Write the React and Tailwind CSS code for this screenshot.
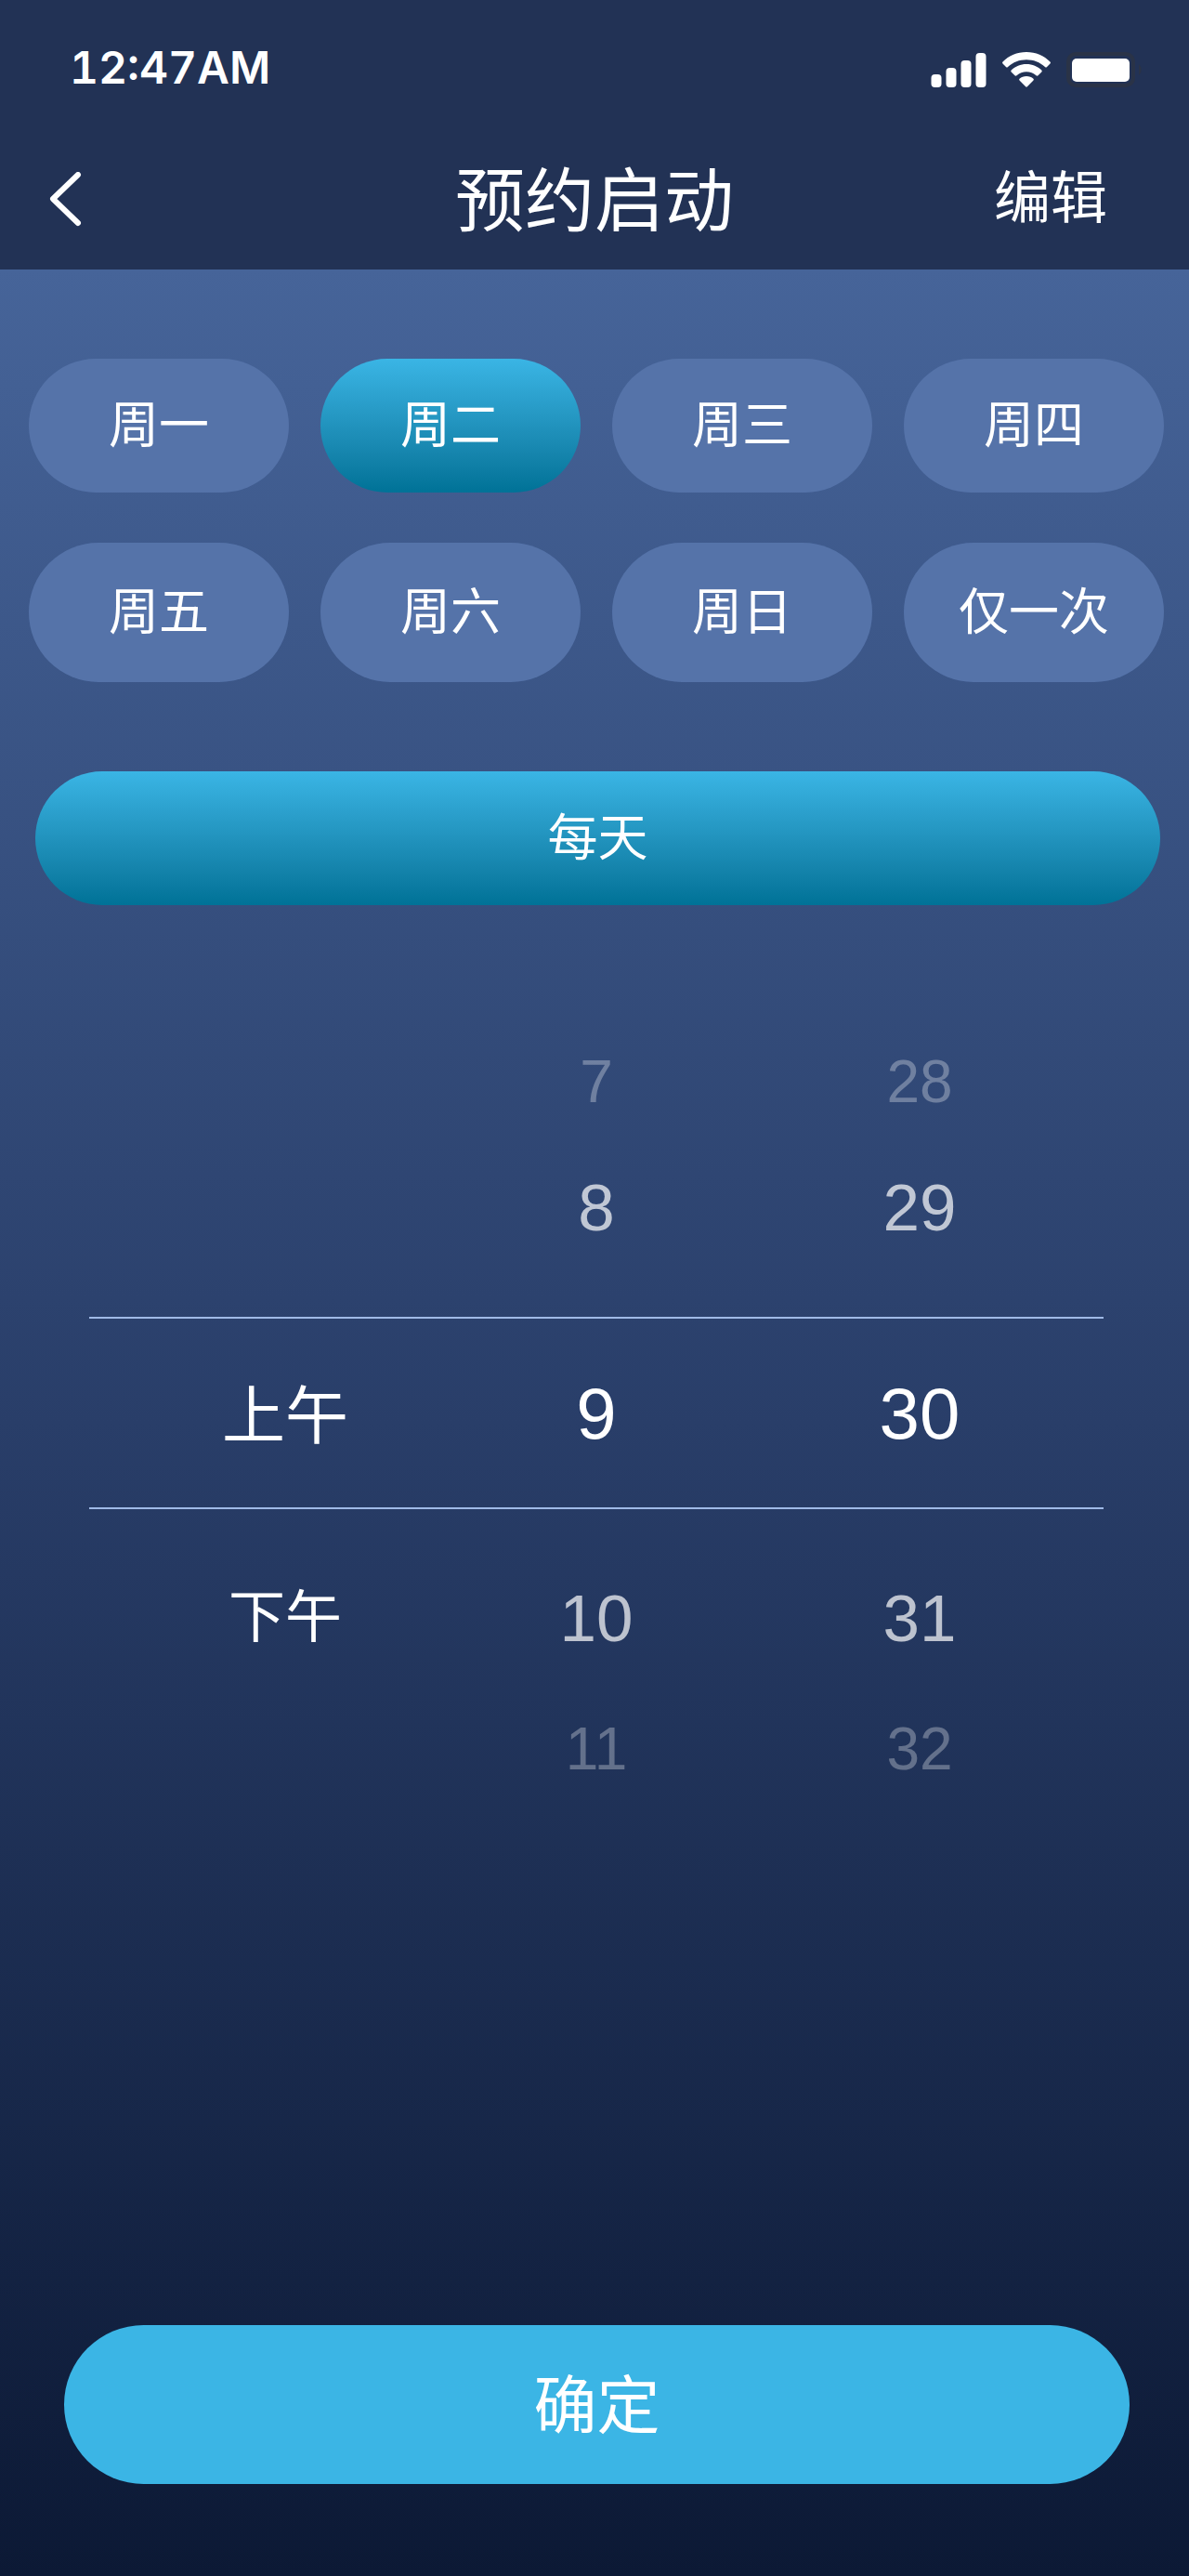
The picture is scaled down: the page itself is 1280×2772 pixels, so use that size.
import React, { useState } from 'react';

const DAYS_TOP = ['周一', '周二', '周三', '周四'];
const DAYS_BOTTOM = ['周五', '周六', '周日', '仅一次'];

const SignalIcon = () => (
  <svg className="h-[38px] w-[60px]" viewBox="0 0 60 38" fill="currentColor" aria-hidden="true">
    <rect x="0.5" y="24" width="11" height="14" rx="4" />
    <rect x="16.5" y="17" width="11" height="21" rx="4" />
    <rect x="32.5" y="9" width="11" height="29" rx="4" />
    <rect x="48.5" y="1" width="11" height="37" rx="4" />
  </svg>
);

const WifiIcon = () => (
  <svg className="h-[38px] w-[54px]" viewBox="0 0 54 38" fill="currentColor" aria-hidden="true">
    <path d="M27 0 C17 0 8 4 1.5 10.5 Q0.5 11.5 1.5 12.5 L5 16 Q6 17 7 16 C12.5 11 19.500 8.300 27 8.300 C34.500 8.300 41.500 11 47 16 Q48 17 49 16 L52.500 12.500 Q53.500 11.500 52.500 10.500 C46 4 37 0 27 0 Z" />
    <path d="M27 13 C20.500 13 15 15.500 10.700 19.500 Q9.700 20.500 10.700 21.500 L14.500 25.300 Q15.500 26 16.500 25.200 C19.500 22.700 23 21.300 27 21.300 C31 21.300 34.500 22.700 37.500 25.200 Q38.500 26 39.500 25.300 L43.300 21.500 Q44.300 20.500 43.300 19.500 C39 15.500 33.500 13 27 13 Z" />
    <path d="M27 26 C24 26 21.500 27 19.500 28.800 Q18.700 29.600 19.500 30.400 L26.200 37.300 Q27 38 27.800 37.300 L34.500 30.400 Q35.300 29.600 34.500 28.800 C32.500 27 30 26 27 26 Z" />
  </svg>
);

const BatteryIcon = () => (
  <svg className="h-[38px] w-[84px]" viewBox="0 0 84 38" aria-hidden="true">
    <rect x="2" y="2" width="70" height="34" rx="8" fill="none" stroke="#2a3347" strokeWidth="4" />
    <path d="M78 13 A8 8 0 0 1 78 25 Z" fill="#2a3347" />
    <rect x="6" y="7" width="62" height="25" rx="5" fill="currentColor" />
  </svg>
);

const DayButton = ({ label, active, onClick }) => (
  <button
    type="button"
    aria-pressed={active}
    onClick={onClick}
    className={
      active
        ? 'rounded-full bg-linear-to-b from-[#3ab5e5] to-[#007297] text-[54px] leading-none'
        : 'rounded-full bg-[#5573a9] text-[54px] leading-none'
    }
  >
    {label}
  </button>
);

// two values above the selected row, the outer one more faded
const ValuesAbove = ({ far, near }) => (
  <div className="flex flex-col font-['Liberation_Sans',sans-serif]">
    <span className="h-[112px] pt-[24px] text-[64px] opacity-30">{far}</span>
    <span className="h-[197px] pt-[44px] text-[71px] opacity-70">{near}</span>
  </div>
);

const ValuesBelow = ({ near, far }) => (
  <div className="flex flex-col font-['Liberation_Sans',sans-serif]">
    <span className="h-[206px] pt-[82px] text-[71px] opacity-70">{near}</span>
    <span className="h-[92px] pt-[20px] text-[64px] opacity-30">{far}</span>
  </div>
);

const App = () => {
  const [day, setDay] = useState('周二');

  return (
    <div className="flex min-h-screen flex-col bg-[#0c1935] font-['Inter','Noto_Sans_CJK_SC',sans-serif] text-white">
      <header className="bg-[#223255]">
        <div className="flex h-[150px] items-center justify-between pr-[48px] pl-[75px]">
          <span className="pb-[4px] text-[48px] leading-none font-semibold tabular-nums">12:47AM</span>
          <div className="flex items-center gap-4">
            <SignalIcon />
            <WifiIcon />
            <BatteryIcon />
          </div>
        </div>
        <div className="grid h-[140px] grid-cols-[1fr_auto_1fr] items-center pb-[10px]">
          <button type="button" aria-label="返回" className="ml-[50px] justify-self-start">
            <svg className="h-[60px] w-[40px]" viewBox="0 0 40 60" fill="none" stroke="currentColor" strokeWidth="6" strokeLinecap="round" strokeLinejoin="round" aria-hidden="true">
              <path d="M34 3 L7 29 L34 55" />
            </svg>
          </button>
          <h1 className="text-[75px] leading-none whitespace-nowrap">预约启动</h1>
          <button type="button" className="mr-[88px] justify-self-end pb-[4px] text-[61px] leading-none">编辑</button>
        </div>
      </header>

      <main className="flex flex-1 flex-col bg-linear-to-b from-[#466499] via-[#293e69] via-50% to-[#0c1935] pt-[96px]">
        <div className="grid auto-rows-[144px] grid-cols-4 gap-[34px] pr-[27px] pl-[31px]">
          {DAYS_TOP.map((d) => (
            <DayButton key={d} label={d} active={d === day} onClick={() => setDay(d)} />
          ))}
        </div>
        <div className="mt-[54px] grid auto-rows-[150px] grid-cols-4 gap-[34px] pr-[27px] pl-[31px]">
          {DAYS_BOTTOM.map((d) => (
            <DayButton key={d} label={d} active={d === day} onClick={() => setDay(d)} />
          ))}
        </div>
        <div className="mt-[96px] grid auto-rows-[144px] pr-[31px] pl-[38px]">
          <DayButton label="每天" active />
        </div>

        <div className="mt-[134px] mr-[92px] ml-[96px] text-center leading-none">
          <div className="grid grid-cols-[342fr_328fr_368fr] pr-[14px] pl-[40px]">
            <div />
            <ValuesAbove far="7" near="8" />
            <ValuesAbove far="28" near="29" />
          </div>
          <div className="grid h-[207px] grid-cols-[342fr_328fr_368fr] items-center border-y-2 border-[#9fb9e6] pr-[14px] pl-[40px]">
            <span className="pt-[4px] text-[68px]">上午</span>
            <span className="font-['Liberation_Sans',sans-serif] text-[78px]">9</span>
            <span className="font-['Liberation_Sans',sans-serif] text-[78px]">30</span>
          </div>
          <div className="grid grid-cols-[342fr_328fr_368fr] pr-[14px] pl-[40px]">
            <span className="pt-[86px] text-[61px]">下午</span>
            <ValuesBelow near="10" far="11" />
            <ValuesBelow near="31" far="32" />
          </div>
        </div>

        <button type="button" className="mt-auto mr-[64px] mb-[99px] ml-[69px] h-[171px] rounded-full bg-[#3bb5e5] text-[68px] leading-none">
          确定
        </button>
      </main>
    </div>
  );
};

export default App;
